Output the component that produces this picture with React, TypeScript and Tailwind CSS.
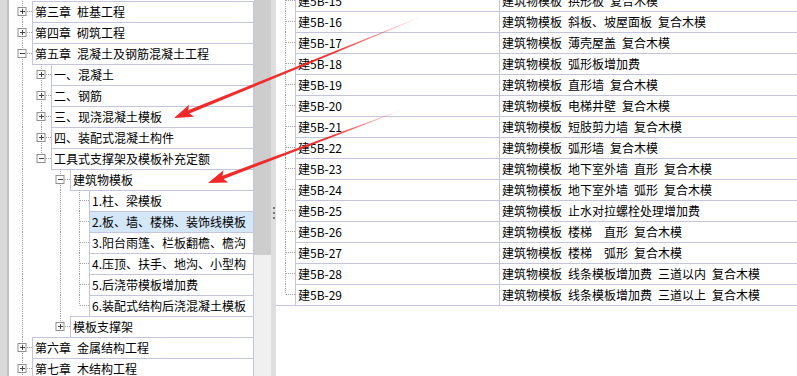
import React from 'react';

type TreeRow = { level: number; text: string; box?: '+' | '-'; selected?: boolean };

const SP = '\u2002';

const treeRows: TreeRow[] = [
  { level: 0, text: `第三章${SP}桩基工程`, box: '+' },
  { level: 0, text: `第四章${SP}砌筑工程`, box: '+' },
  { level: 0, text: `第五章${SP}混凝土及钢筋混凝土工程`, box: '-' },
  { level: 1, text: '一、混凝土', box: '+' },
  { level: 1, text: '二、钢筋', box: '+' },
  { level: 1, text: '三、现浇混凝土模板', box: '+' },
  { level: 1, text: '四、装配式混凝土构件', box: '+' },
  { level: 1, text: '工具式支撑架及模板补充定额', box: '-' },
  { level: 2, text: '建筑物模板', box: '-' },
  { level: 3, text: '1.柱、梁模板' },
  { level: 3, text: '2.板、墙、楼梯、装饰线模板', selected: true },
  { level: 3, text: '3.阳台雨篷、栏板翻檐、檐沟' },
  { level: 3, text: '4.压顶、扶手、地沟、小型构' },
  { level: 3, text: '5.后浇带模板增加费' },
  { level: 3, text: '6.装配式结构后浇混凝土模板' },
  { level: 2, text: '模板支撑架', box: '+' },
  { level: 0, text: `第六章${SP}金属结构工程`, box: '+' },
  { level: 0, text: `第七章${SP}木结构工程`, box: '+' },
];

// which guide lines run through each row: [level, 'full' | 'top']
const guideSpans: { level: number; from: number; to: number }[] = [
  { level: 0, from: 0, to: 99 },
  { level: 1, from: 3, to: 7 },
  { level: 2, from: 8, to: 15 },
  { level: 3, from: 9, to: 14 },
];

const items: [string, string][] = [
  ['建5B-15', `建筑物模板${SP}拱形板${SP}复合木模`],
  ['建5B-16', `建筑物模板${SP}斜板、坡屋面板${SP}复合木模`],
  ['建5B-17', `建筑物模板${SP}薄壳屋盖${SP}复合木模`],
  ['建5B-18', `建筑物模板${SP}弧形板增加费`],
  ['建5B-19', `建筑物模板${SP}直形墙${SP}复合木模`],
  ['建5B-20', `建筑物模板${SP}电梯井壁${SP}复合木模`],
  ['建5B-21', `建筑物模板${SP}短肢剪力墙${SP}复合木模`],
  ['建5B-22', `建筑物模板${SP}弧形墙${SP}复合木模`],
  ['建5B-23', `建筑物模板${SP}地下室外墙${SP}直形${SP}复合木模`],
  ['建5B-24', `建筑物模板${SP}地下室外墙${SP}弧形${SP}复合木模`],
  ['建5B-25', `建筑物模板${SP}止水对拉螺栓处理增加费`],
  ['建5B-26', `建筑物模板${SP}楼梯${SP}${SP}直形${SP}复合木模`],
  ['建5B-27', `建筑物模板${SP}楼梯${SP}${SP}弧形${SP}复合木模`],
  ['建5B-28', `建筑物模板${SP}线条模板增加费${SP}三道以内${SP}复合木模`],
  ['建5B-29', `建筑物模板${SP}线条模板增加费${SP}三道以上${SP}复合木模`],
];

const DOT = '#a2a2a2';
const CY = 10.5;

const Box = ({ cx, sign }: { cx: number; sign: '+' | '-' }) => (
  <g>
    <rect x={cx - 4} y={6.5} width={8} height={8} fill="#fff" stroke="#8f8f8f" />
    <line x1={cx - 2} y1={CY} x2={cx + 3} y2={CY} stroke="#444" />
    {sign === '+' && <line x1={cx + 0.5} y1={8} x2={cx + 0.5} y2={13} stroke="#444" />}
  </g>
);

const TreeIndent = ({ row, index }: { row: TreeRow; index: number }) => {
  const width = 22 + row.level * 19;
  const cx = 12 + row.level * 19;
  return (
    <svg width={width} height={22} className="shrink-0">
      {guideSpans
        .filter((g) => index >= g.from && index <= g.to)
        .map((g) => {
          const x = 12.5 + g.level * 19;
          return (
            <line
              key={g.level}
              x1={x}
              y1={0}
              x2={x}
              y2={index === g.to ? CY : 22}
              stroke={DOT}
              strokeDasharray="1 1"
            />
          );
        })}
      <line x1={row.box ? cx + 5 : cx + 1} y1={CY} x2={width} y2={CY} stroke={DOT} strokeDasharray="1 1" />
      {row.box && <Box cx={cx} sign={row.box} />}
    </svg>
  );
};

function arrowShapes(tail: [number, number], tip: [number, number]) {
  const dx = tail[0] - tip[0];
  const dy = tail[1] - tip[1];
  const len = Math.hypot(dx, dy);
  const ux = dx / len;
  const uy = dy / len;
  const nx = -uy;
  const ny = ux;
  const p = (d: number, w: number) => `${tip[0] + ux * d + nx * w},${tip[1] + uy * d + ny * w}`;
  const line = [
    `${tail[0] + nx * 0.4},${tail[1] + ny * 0.4}`,
    p(14, 1.8),
    p(14, -1.8),
    `${tail[0] - nx * 0.4},${tail[1] - ny * 0.4}`,
  ].join(' ');
  const head = [p(0, 0), p(19, 6.5), p(15, 0), p(19, -6.5)].join(' ');
  return { line, head };
}

const Arrows = () => {
  const a1 = arrowShapes([423, 16], [174, 118]);
  const a2 = arrowShapes([402, 110], [208, 183]);
  return (
    <svg className="absolute inset-0 pointer-events-none" width={797} height={376}>
      <defs>
        <linearGradient id="g1" gradientUnits="userSpaceOnUse" x1={423} y1={16} x2={174} y2={118}>
          <stop offset="0" stopColor="#f02828" stopOpacity="0" />
          <stop offset="0.35" stopColor="#f02828" stopOpacity="0.95" />
          <stop offset="1" stopColor="#f02828" />
        </linearGradient>
        <linearGradient id="g2" gradientUnits="userSpaceOnUse" x1={402} y1={110} x2={208} y2={183}>
          <stop offset="0" stopColor="#f02828" stopOpacity="0" />
          <stop offset="0.35" stopColor="#f02828" stopOpacity="0.95" />
          <stop offset="1" stopColor="#f02828" />
        </linearGradient>
      </defs>
      <polygon points={a1.line} fill="url(#g1)" />
      <polygon points={a1.head} fill="#f02828" />
      <polygon points={a2.line} fill="url(#g2)" />
      <polygon points={a2.head} fill="#f02828" />
    </svg>
  );
};

export default function App() {
  return (
    <div
      className="relative flex h-[376px] w-[797px] overflow-hidden bg-white text-[12px] text-black"
      style={{ fontFamily: "'Noto Sans CJK SC', 'Noto Sans', sans-serif" }}
    >
      {/* left edge */}
      <div className="w-[7px] shrink-0 bg-[#dadada]" />
      <div className="w-[2px] shrink-0 bg-[#c2c2c2]" />
      <div className="w-[1px] shrink-0" />

      {/* chapter tree */}
      <div className="flex w-[244px] shrink-0 flex-col overflow-hidden pt-px">
        {treeRows.map((row, i) => (
          <div key={i} className={`flex h-[22px] shrink-0 ${i > 0 ? '-mt-px' : ''}`}>
            <TreeIndent row={row} index={i} />
            <div
              className={`flex min-w-0 flex-1 items-center overflow-hidden whitespace-nowrap border border-[#c4c4dc] pl-[2px] ${
                row.selected ? 'bg-[#d4e7f8]' : 'bg-white'
              }`}
            >
              {row.text}
            </div>
          </div>
        ))}
      </div>

      {/* scrollbar */}
      <div className="flex w-[17px] shrink-0 flex-col">
        <div className="h-[255px] bg-[#cdcdcd]" />
        <div className="flex-1 bg-[#f0f0f0]" />
      </div>

      {/* splitter */}
      <div className="flex w-[5px] shrink-0 flex-col gap-[3px] bg-[#dedede] pl-[2px] pt-[207px]">
        <div className="h-[2px] w-[2px] bg-[#777]" />
        <div className="h-[2px] w-[2px] bg-[#777]" />
        <div className="h-[2px] w-[2px] bg-[#777]" />
      </div>

      {/* quota list */}
      <div className="flex min-w-0 flex-1 flex-col overflow-hidden">
        <div className="-mt-[10px]" />
        {items.map(([code, name], i) => (
          <div key={code} className={`flex h-[22px] shrink-0 ${i > 0 ? '-mt-px' : ''}`}>
            <svg width={19} height={22} className="shrink-0">
              <line
                x1={9.5}
                y1={0}
                x2={9.5}
                y2={i === items.length - 1 ? CY : 22}
                stroke={DOT}
                strokeDasharray="1 1"
              />
              <line x1={10} y1={CY} x2={19} y2={CY} stroke={DOT} strokeDasharray="1 1" />
            </svg>
            <div className="flex w-[204px] shrink-0 items-center whitespace-nowrap border border-r-0 border-[#c4c4dc] pl-[2px]">
              {code}
            </div>
            <div className="flex flex-1 items-center whitespace-nowrap border border-r-0 border-[#c4c4dc] pl-[2px]">
              {name}
            </div>
          </div>
        ))}
        <div className="-mt-px border-t border-[#c4c4dc]" />
      </div>

      <Arrows />
    </div>
  );
}
